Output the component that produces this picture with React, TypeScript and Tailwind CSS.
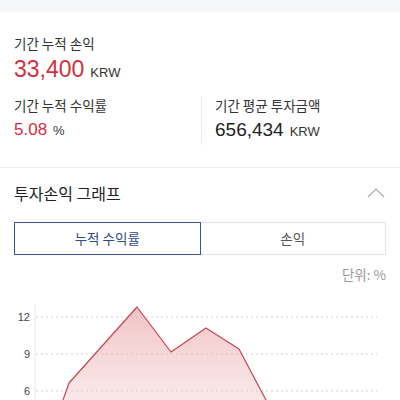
import React, { useState } from 'react';

const font = { fontFamily: '"Noto Sans CJK KR", "Liberation Sans", sans-serif' };
const latin = { fontFamily: '"Liberation Sans", sans-serif' };

// chart points, taken as pixel coords inside the 400-wide svg (svg top = 295)
const points: [number, number][] = [
    [63, 105], [69, 88], [137, 12], [171, 57], [206, 33], [239, 54], [266, 105],
];

const ProfitChart: React.FC = () => {
    const line = points.map(p => p.join(',')).join(' ');
    const area = `${line} 266,110 63,110`;
    return (
        <svg width="400" height="105" viewBox="0 0 400 105" className="block">
            <defs>
                <linearGradient id="fillRed" x1="0" y1="0" x2="0" y2="1">
                    <stop offset="0%" stopColor="#e9a3a6" stopOpacity="0.65" />
                    <stop offset="100%" stopColor="#f6d5d6" stopOpacity="0.5" />
                </linearGradient>
            </defs>
            <line x1="35" y1="10" x2="35" y2="105" stroke="#e6e6e6" strokeWidth="1" />
            {[22, 59, 96].map(y => (
                <line key={y} x1="36" y1={y} x2="377" y2={y} stroke="#cfcfcf" strokeWidth="1" strokeDasharray="2 3" />
            ))}
            <text x="30" y="26" textAnchor="end" fontSize="11" fill="#444" fontFamily="Liberation Sans, sans-serif">12</text>
            <text x="30" y="63" textAnchor="end" fontSize="11" fill="#444" fontFamily="Liberation Sans, sans-serif">9</text>
            <text x="30" y="100" textAnchor="end" fontSize="11" fill="#444" fontFamily="Liberation Sans, sans-serif">6</text>
            <polygon points={area} fill="url(#fillRed)" />
            <polyline points={line} fill="none" stroke="#c4464d" strokeWidth="1.2" strokeLinejoin="round" />
        </svg>
    );
};

const App: React.FC = () => {
    const [tab, setTab] = useState<'rate' | 'pnl'>('rate');

    return (
        <div className="w-[400px] h-[400px] overflow-hidden bg-white" style={font}>
            <div className="h-3 bg-[#f5f6f8]"></div>
            <div className="px-[14px] pt-[22px]">
                <p className="text-[13.5px] leading-[18px] text-[#333]">기간 누적 손익</p>
                <p className="mt-[1px] flex items-baseline leading-[32px]">
                    <span className="text-[23px] text-[#d2303c]" style={latin}>33,400</span>
                    <span className="ml-[6px] text-[13px] text-[#333]" style={latin}>KRW</span>
                </p>
                <div className="mt-[7px] flex">
                    <div className="w-[187px]">
                        <p className="text-[13.5px] leading-[18px] text-[#333]">기간 누적 수익률</p>
                        <p className="mt-[3px] flex items-baseline leading-[26px]">
                            <span className="text-[17px] text-[#d2303c]" style={latin}>5.08</span>
                            <span className="ml-[6px] text-[13px] text-[#333]" style={latin}>%</span>
                        </p>
                    </div>
                    <div className="border-l border-[#ececec] pl-[13px]">
                        <p className="text-[13.5px] leading-[18px] text-[#333]">기간 평균 투자금액</p>
                        <p className="mt-[3px] flex items-baseline leading-[26px]">
                            <span className="text-[19px] text-[#222]" style={latin}>656,434</span>
                            <span className="ml-[6px] text-[13px] text-[#333]" style={latin}>KRW</span>
                        </p>
                    </div>
                </div>
            </div>
            <div className="mt-[22px] border-t border-[#ececec]"></div>
            <div className="px-[14px]">
                <div className="flex items-center justify-between h-[50px]">
                    <h2 className="text-[16px] text-[#222]">투자손익 그래프</h2>
                    <svg width="18" height="10" viewBox="0 0 18 10" className="mr-[1px]">
                        <polyline points="1,9 9,1 17,9" fill="none" stroke="#aaa" strokeWidth="1.1" />
                    </svg>
                </div>
                <div className="mt-[4px] flex h-[33px]">
                    <button
                        onClick={() => setTab('rate')}
                        className={tab === 'rate'
                            ? 'flex-1 border border-[#3b5594] text-[13.5px] text-[#2c4a8a]'
                            : 'flex-1 border border-[#e3e3e3] border-r-0 text-[13.5px] text-[#555]'}
                    >누적 수익률</button>
                    <button
                        onClick={() => setTab('pnl')}
                        className={tab === 'pnl'
                            ? 'flex-1 border border-[#3b5594] text-[13.5px] text-[#2c4a8a]'
                            : 'flex-1 border border-[#e3e3e3] border-l-0 text-[13.5px] text-[#555]'}
                    >손익</button>
                </div>
                <p className="mt-[10px] text-right text-[13.5px] leading-[18px] text-[#9a9a9a]">단위: %</p>
            </div>
            <div className="mt-[12px]">
                <ProfitChart />
            </div>
        </div>
    );
};

export default App;
